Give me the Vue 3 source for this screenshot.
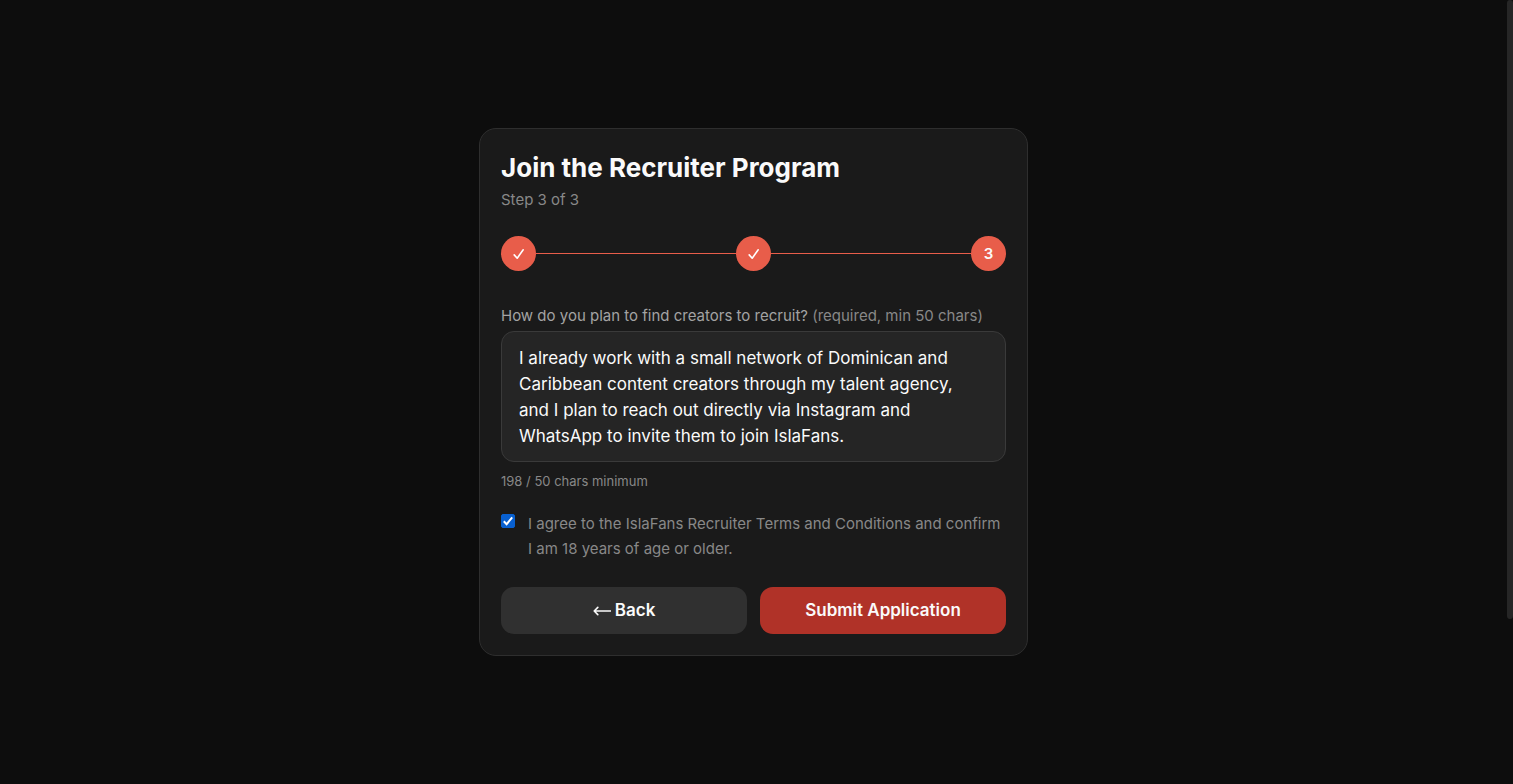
<script setup>
import { ref, computed } from 'vue'

const steps = [
  { id: 1, done: true },
  { id: 2, done: true },
  { id: 3, done: false },
]
const plan = ref(
  'I already work with a small network of Dominican and Caribbean content creators through my talent agency, and I plan to reach out directly via Instagram and WhatsApp to invite them to join IslaFans.'
)
const count = computed(() => plan.value.length)
const agreed = ref(true)
</script>

<template>
  <div class="page">
    <main class="stage">
      <form class="card" @submit.prevent>
        <h1 class="title">Join the Recruiter Program</h1>
        <p class="subtitle">Step 3 of 3</p>

        <div class="stepper">
          <template v-for="(step, i) in steps" :key="step.id">
            <span v-if="i > 0" class="line"></span>
            <span class="dot">
              <svg v-if="step.done" viewBox="0 0 16 16" width="16" height="16" aria-hidden="true">
                <path d="M3.2 8.9 L6.2 12.2 L12.2 3.8" />
              </svg>
              <template v-else>{{ step.id }}</template>
            </span>
          </template>
        </div>

        <label class="label" for="plan">How do you plan to find creators to recruit? <span class="hint">(required, min 50 chars)</span></label>
        <textarea id="plan" v-model="plan" class="area" rows="4"></textarea>
        <p class="counter">{{ count }} / 50 chars minimum</p>

        <label class="agree" for="terms">
          <span class="box">
            <input id="terms" v-model="agreed" type="checkbox" />
            <svg v-if="agreed" viewBox="0 0 14 14" width="14" height="14" aria-hidden="true">
              <path d="M2.8 7.2 L5.6 10.2 L11.2 3.4" />
            </svg>
          </span>
          <span>I agree to the IslaFans Recruiter Terms and Conditions and confirm I am 18 years of age or older.</span>
        </label>

        <div class="actions">
          <button type="button" class="btn">
            <svg class="arrow" viewBox="0 0 18 10" width="18" height="10" aria-hidden="true">
              <path d="M17.5 5 H1.2 M4.8 1.4 L1.2 5 L4.8 8.6" />
            </svg>
            Back
          </button>
          <button type="submit" class="btn primary">Submit Application</button>
        </div>
      </form>
    </main>
    <div class="track" aria-hidden="true"><div class="thumb"></div></div>
  </div>
</template>

<style>
body {
  background: #0d0d0d;
}
</style>

<style scoped>
.page {
  display: flex;
  min-height: 100vh;
  background: #0d0d0d;
  color: #fafafa;
  font-family: Inter, "Liberation Sans", sans-serif;
}
.stage {
  flex: 1;
  display: flex;
  align-items: center;
  justify-content: center;
}
.track {
  width: 6px;
}
.thumb {
  height: 79vh;
  border-radius: 3px;
  background: #262626;
}
.card {
  box-sizing: border-box;
  width: 100%;
  max-width: 549px;
  padding: 21px;
  border: 1px solid #2e2e2e;
  border-radius: 17px;
  background: #1a1a1a;
}
.title {
  margin: 0;
  font-size: 26px;
  line-height: 36px;
  font-weight: 700;
}
.subtitle {
  margin: 2px 0 24px;
  font-size: 15px;
  line-height: 24px;
  color: #888;
}
.stepper {
  display: flex;
  align-items: center;
  margin-bottom: 33px;
}
.dot {
  display: flex;
  align-items: center;
  justify-content: center;
  width: 35px;
  height: 35px;
  border-radius: 50%;
  background: #e85d4a;
  font-size: 15px;
  font-weight: 600;
}
.dot svg,
.box svg {
  fill: none;
  stroke: #fff;
  stroke-width: 1.6;
  stroke-linecap: round;
  stroke-linejoin: round;
}
.line {
  flex: 1;
  height: 1px;
  background: #e85d4a;
}
.label {
  display: block;
  margin-bottom: 3px;
  font-size: 15px;
  line-height: 24px;
  color: #a3a3a3;
}
.hint {
  color: #888;
}
.area {
  display: block;
  box-sizing: border-box;
  width: 100%;
  padding: 13px 24px 12px 17px;
  border: 1px solid #3a3a3a;
  border-radius: 13px;
  outline: none;
  background: #252525;
  color: #fafafa;
  font: inherit;
  font-size: 17px;
  line-height: 26px;
  resize: none;
  overflow: hidden;
}
.counter {
  margin: 9px 0 20px;
  font-size: 13px;
  line-height: 20px;
  color: #888;
}
.agree {
  display: flex;
  align-items: flex-start;
  gap: 13px;
  margin-bottom: 26px;
  font-size: 15px;
  line-height: 25px;
  color: #888;
}
.box {
  flex: none;
  display: grid;
  margin-top: 3px;
}
.box > * {
  grid-area: 1 / 1;
}
.box input {
  appearance: none;
  width: 14px;
  height: 14px;
  margin: 0;
  border: 1px solid #888;
  border-radius: 2px;
}
.box input:checked {
  border-color: #0860d0;
  background: #0860d0;
}
.box svg {
  stroke-width: 2;
  stroke-linecap: butt;
  stroke-linejoin: miter;
  pointer-events: none;
}
.actions {
  display: grid;
  grid-template-columns: 1fr 1fr;
  gap: 13px;
}
.btn {
  height: 47px;
  padding: 0 16px 2px;
  border: 0;
  border-radius: 13px;
  background: #303030;
  color: #fafafa;
  font: inherit;
  font-size: 17px;
  font-weight: 600;
  cursor: pointer;
}
.arrow {
  fill: none;
  stroke: currentColor;
  stroke-width: 1.6;
  stroke-linecap: round;
  stroke-linejoin: round;
}
.primary {
  background: #b03228;
}
</style>
